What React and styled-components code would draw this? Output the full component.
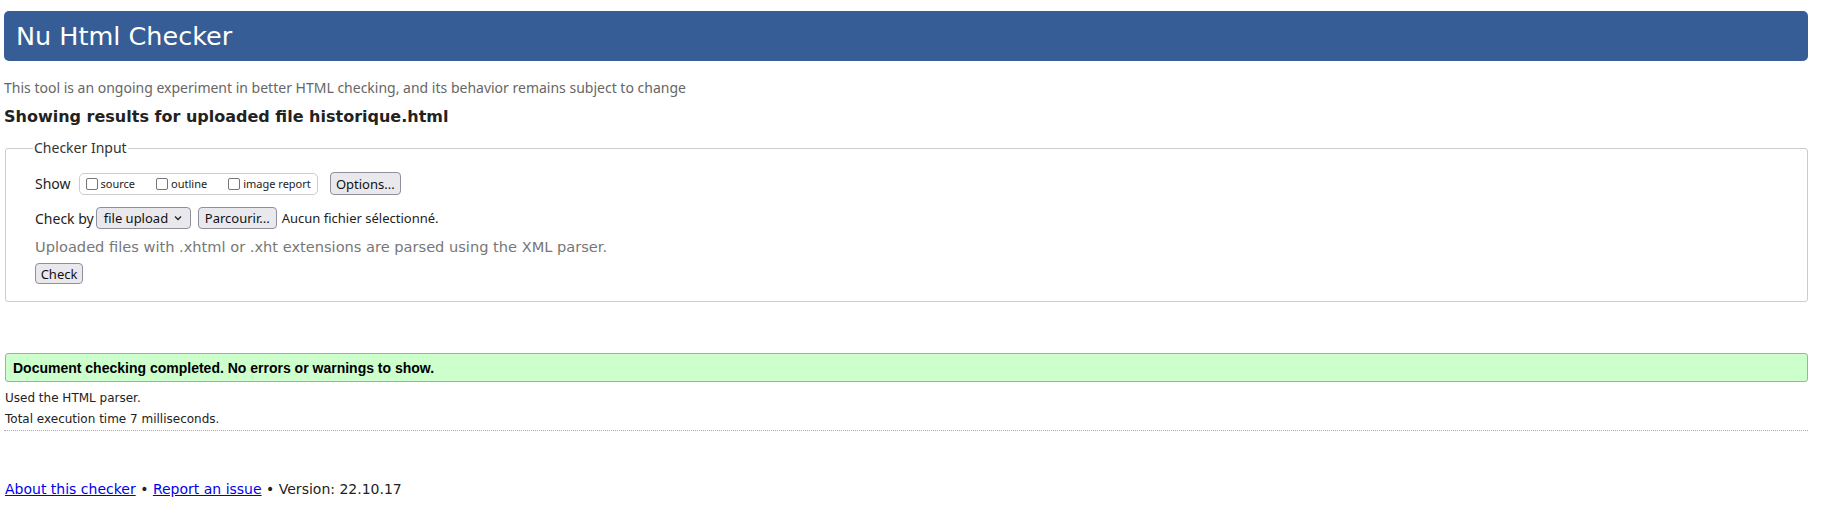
import styled, { createGlobalStyle } from "styled-components";

const GlobalStyle = createGlobalStyle`
  html, body {
    margin: 0;
    padding: 0;
    background: #fff;
  }
  body {
    font-family: "Noto Sans", "DejaVu Sans", sans-serif;
    color: #222;
  }
`;

const Page = styled.div`
  padding: 11px 21px 0 4px;
`;

const Banner = styled.h1`
  margin: 0;
  height: 50px;
  display: flex;
  align-items: center;
  padding-left: 12px;
  background-color: #365d95;
  border-radius: 5px;
  color: #fff;
  font-family: "DejaVu Sans", sans-serif;
  font-weight: 400;
  font-size: 25.5px;
`;

const Intro = styled.p`
  margin: 17px 0 0 0;
  line-height: 20px;
  font-size: 14px;
  color: #666;
`;

const Heading = styled.h2`
  margin: 9px 0 0 0;
  line-height: 20px;
  font-family: "DejaVu Sans", sans-serif;
  font-size: 16px;
  font-weight: 700;
  color: #222;
`;

const Fieldset = styled.fieldset`
  margin: 12px 0 0 1px;
  padding: 15px 0 17px 29px;
  border: 1px solid #ccc;
  border-radius: 3px;
  display: flex;
  flex-direction: column;
`;

const Legend = styled.legend`
  margin-left: -2px;
  padding: 0 1px;
  font-size: 14px;
  line-height: 18px;
  color: #333;
`;

const Row = styled.div`
  display: flex;
  align-items: center;
  height: ${(p) => p.h || 23}px;
  margin-top: ${(p) => p.mt || 0}px;
  font-size: 14px;
  color: #222;
`;

const Label = styled.span`
  margin-right: ${(p) => p.mr || 3}px;
`;

const Note = styled.span`
  font-size: 13px;
`;

const Group = styled.div`
  display: flex;
  align-items: center;
  height: 22px;
  box-sizing: border-box;
  border: 1px solid #ccc;
  border-radius: 5px;
  padding: 0 6px 0 6px;
  margin-right: 12px;
`;

const Check = styled.label`
  display: flex;
  align-items: center;
  font-size: 11px;
  color: #222;
  margin-right: ${(p) => p.mr || 0}px;
`;

const Box = styled.span`
  width: 12px;
  height: 12px;
  box-sizing: border-box;
  border: 1px solid #767676;
  border-radius: 2px;
  background: #fff;
  margin-right: 3px;
`;

const Button = styled.span`
  display: inline-flex;
  align-items: center;
  justify-content: center;
  box-sizing: border-box;
  height: ${(p) => p.h || 23}px;
  width: ${(p) => (p.w ? `${p.w}px` : "auto")};
  padding: 0 5px;
  background: #e9e9ed;
  border: 1px solid #8f8f9d;
  border-radius: 4px;
  font-size: 13px;
  color: #111;
  margin-right: ${(p) => p.mr || 0}px;
`;

const Select = styled(Button)`
  justify-content: space-between;
  padding: 0 8px 0 7px;
`;

const Hint = styled.div`
  margin-top: 9px;
  line-height: 18px;
  font-family: "DejaVu Sans", sans-serif;
  font-size: 14.6px;
  color: #777;
`;

const Success = styled.div`
  margin: 51px 0 0 1px;
  height: 29px;
  box-sizing: border-box;
  display: flex;
  align-items: center;
  padding-left: 7px;
  background: #ccffcc;
  border: 1px solid #aaa;
  border-radius: 3px;
  font-family: "Liberation Sans", Arial, sans-serif;
  font-weight: 700;
  font-size: 14px;
  color: #000;
`;

const Detail = styled.p`
  margin: ${(p) => p.mt || 0}px 0 0 1px;
  line-height: 21px;
  font-family: "DejaVu Sans", sans-serif;
  font-size: 12px;
  color: #222;
`;

const Rule = styled.hr`
  margin: 0;
  border: 0;
  border-top: 1px dotted #aaa;
`;

const Footer = styled.p`
  margin: 48px 0 0 1px;
  line-height: 20px;
  font-family: "DejaVu Sans", sans-serif;
  font-size: 14px;
  color: #222;

  a {
    color: #0000ee;
    text-decoration: underline;
  }
`;

const Chevron = () => (
  <svg width="8" height="6" viewBox="0 0 8 6">
    <path d="M1 1.5 L4 4.5 L7 1.5" fill="none" stroke="#222" strokeWidth="1.3" />
  </svg>
);

export default function App() {
  return (
    <>
      <GlobalStyle />
      <Page>
        <Banner>Nu Html Checker</Banner>
        <Intro>
          This tool is an ongoing experiment in better HTML checking, and its
          behavior remains subject to change
        </Intro>
        <Heading>Showing results for uploaded file historique.html</Heading>
        <Fieldset>
          <Legend>Checker Input</Legend>
          <Row>
            <Label mr={8}>Show</Label>
            <Group>
              <Check mr={21}>
                <Box />
                source
              </Check>
              <Check mr={21}>
                <Box />
                outline
              </Check>
              <Check>
                <Box />
                image report
              </Check>
            </Group>
            <Button w={71}>Options...</Button>
          </Row>
          <Row h={22} mt={12}>
            <Label mr={2}>Check by</Label>
            <Select h={22} w={95} mr={7}>
              file upload <Chevron />
            </Select>
            <Button h={22} w={79} mr={5}>Parcourir...</Button>
            <Note>Aucun fichier sélectionné.</Note>
          </Row>
          <Hint>
            Uploaded files with .xhtml or .xht extensions are parsed using the
            XML parser.
          </Hint>
          <Row h={21} mt={7}>
            <Button h={21} w={48}>Check</Button>
          </Row>
        </Fieldset>
        <Success>
          Document checking completed. No errors or warnings to show.
        </Success>
        <Detail mt={6}>Used the HTML parser.</Detail>
        <Detail>Total execution time 7 milliseconds.</Detail>
        <Rule />
        <Footer>
          <a href="#about">About this checker</a> •{" "}
          <a href="#issue">Report an issue</a> • Version: 22.10.17
        </Footer>
      </Page>
    </>
  );
}
